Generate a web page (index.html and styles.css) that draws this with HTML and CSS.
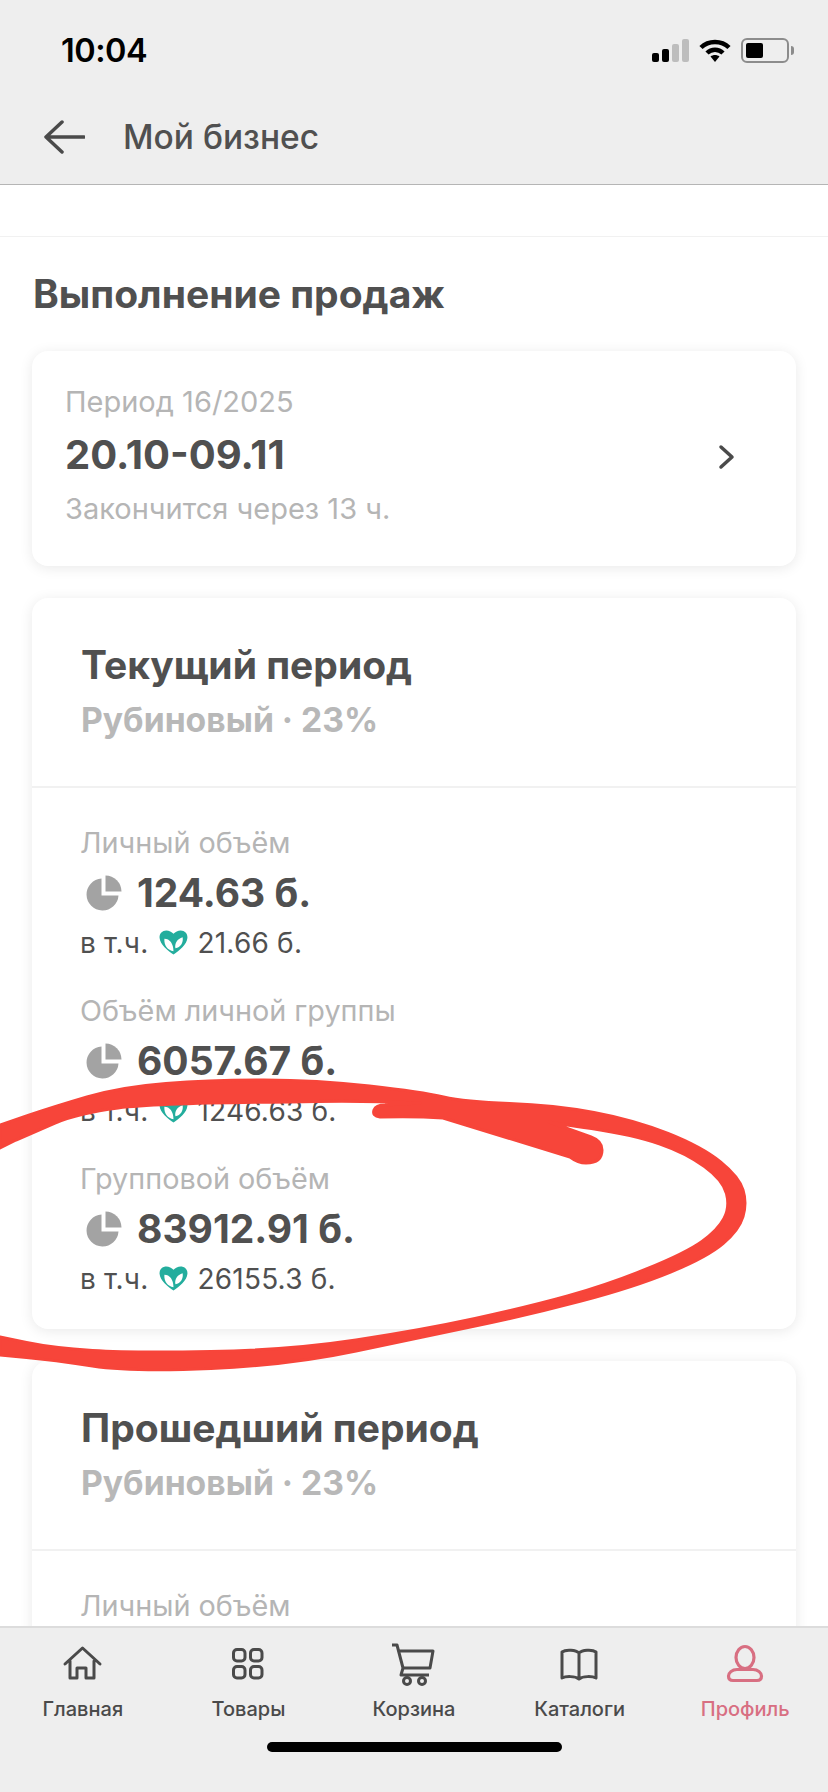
FILE: index.html
```html
<!DOCTYPE html>
<html lang="ru">
<head>
<meta charset="utf-8">
<title>Мой бизнес</title>
<link rel="stylesheet" href="styles.css">
</head>
<body>

<svg class="defs" width="0" height="0">
  <symbol id="pie" viewBox="0 0 36 36">
    <path d="M15.5 3.5A16 16 0 1 0 32.5 20.5H15.5Z" fill="#a3a3a3"/>
    <path d="M19.5 0.5A16 16 0 0 1 35.5 16.5H19.5Z" fill="#a3a3a3"/>
  </symbol>
  <symbol id="heart" viewBox="0 0 30 26">
    <path d="M15 25.500C9 21 1 15.500 0.500 8C0.200 3.500 3.500 0.500 7.500 0.500C10.500 0.500 13 2 15 4C17 2 19.500 0.500 22.500 0.500C26.500 0.500 29.800 3.500 29.500 8C29 15.500 21 21 15 25.500Z" fill="#23ad9d"/>
    <path d="M15 22C9 21 5 16 5.500 9C11 9 15 14 15 22ZM17 19C16 14 19 9 24.500 7.500C25.500 13 22.500 18 17 19Z" fill="#fff"/>
  </symbol>
</svg>

<div class="app">
  <header class="top-bar">
    <div class="status-bar">
      <span class="clock">10:04</span>
      <div class="status-icons">
        <div class="signal">
          <i class="bar bar-1"></i><i class="bar bar-2"></i><i class="bar bar-3"></i><i class="bar bar-4"></i>
        </div>
        <svg class="wifi" width="32" height="24" viewBox="0 0 32 24">
          <path d="M2 9.500C9.500 2 22.500 2 30 9.500" fill="none" stroke="#000" stroke-width="4.500"/>
          <path d="M8 15C12.500 10.500 19.500 10.500 24 15" fill="none" stroke="#000" stroke-width="4.500"/>
          <path d="M11.500 18.500L16 24L20.500 18.500C18 16.500 14 16.500 11.500 18.500Z" fill="#000"/>
        </svg>
        <div class="battery"><i class="battery-level"></i></div>
        <i class="battery-nub"></i>
      </div>
    </div>
    <div class="nav-bar">
      <svg class="back" width="42" height="34" viewBox="0 0 42 34">
        <path d="M41 17H3M19 2L3 17L19 32" fill="none" stroke="#4a4a4a" stroke-width="3.500" stroke-linecap="round" stroke-linejoin="round"/>
      </svg>
      <span class="nav-title">Мой бизнес</span>
    </div>
  </header>

  <main class="content">
    <div class="strip"></div>
    <h1 class="page-title">Выполнение продаж</h1>

    <section class="card period-card">
      <div>
        <div class="period-label">Период 16/2025</div>
        <div class="period-dates">20.10-09.11</div>
        <div class="period-label period-hint">Закончится через 13 ч.</div>
      </div>
      <svg class="chevron" width="18" height="26" viewBox="0 0 18 26">
        <path d="M3 3L14 13L3 23" fill="none" stroke="#4a4a4a" stroke-width="3.500" stroke-linecap="round" stroke-linejoin="round"/>
      </svg>
    </section>

    <section class="card">
      <div class="card-head">
        <h2>Текущий период</h2>
        <div class="rank">Рубиновый · 23%</div>
      </div>
      <div class="metrics">
        <div class="metric">
          <div class="metric-label">Личный объём</div>
          <div class="metric-value"><svg class="pie"><use href="#pie"/></svg>124.63 б.</div>
          <div class="metric-note">в т.ч. <svg class="heart"><use href="#heart"/></svg> 21.66 б.</div>
        </div>
        <div class="metric">
          <div class="metric-label">Объём личной группы</div>
          <div class="metric-value"><svg class="pie"><use href="#pie"/></svg>6057.67 б.</div>
          <div class="metric-note">в т.ч. <svg class="heart"><use href="#heart"/></svg> 1246.63 б.</div>
        </div>
        <div class="metric">
          <div class="metric-label">Групповой объём</div>
          <div class="metric-value"><svg class="pie"><use href="#pie"/></svg>83912.91 б.</div>
          <div class="metric-note">в т.ч. <svg class="heart"><use href="#heart"/></svg> 26155.3 б.</div>
        </div>
      </div>
    </section>

    <section class="card">
      <div class="card-head">
        <h2>Прошедший период</h2>
        <div class="rank">Рубиновый · 23%</div>
      </div>
      <div class="metrics">
        <div class="metric">
          <div class="metric-label">Личный объём</div>
        </div>
      </div>
    </section>
  </main>

  <nav class="tab-bar">
    <div class="tabs">
      <div class="tab">
        <svg width="44" height="44" viewBox="0 0 44 44">
          <path d="M4 22L21.500 6L39 22M9 19V36H16V26H25V36H33V19" fill="none" stroke="currentColor" stroke-width="3" stroke-linejoin="round" stroke-linecap="round"/>
        </svg>
        <span>Главная</span>
      </div>
      <div class="tab">
        <svg width="44" height="44" viewBox="0 0 44 44">
          <g fill="none" stroke="currentColor" stroke-width="3">
            <rect x="7.500" y="7.500" width="11.500" height="11.500" rx="3.500"/>
            <rect x="24.500" y="7.500" width="11.500" height="11.500" rx="3.500"/>
            <rect x="7.500" y="24.500" width="11.500" height="11.500" rx="3.500"/>
            <rect x="24.500" y="24.500" width="11.500" height="11.500" rx="3.500"/>
          </g>
        </svg>
        <span>Товары</span>
      </div>
      <div class="tab">
        <svg width="44" height="44" viewBox="0 0 44 44">
          <g fill="none" stroke="currentColor" stroke-width="3" stroke-linejoin="round">
            <path d="M0 3H5L11 26L9 33H37"/>
            <path d="M7 9H41L38 26H11"/>
            <circle cx="15" cy="39" r="3.500"/>
            <circle cx="30" cy="39" r="3.500"/>
          </g>
        </svg>
        <span>Корзина</span>
      </div>
      <div class="tab">
        <svg width="44" height="44" viewBox="0 0 44 44">
          <path d="M21 11C18 8 8 7 4 10V36C8 34 17 34 21 37C25 34 34 34 38 36V10C34 7 24 8 21 11V37" fill="none" stroke="currentColor" stroke-width="3" stroke-linejoin="round"/>
        </svg>
        <span>Каталоги</span>
      </div>
      <div class="tab tab-active">
        <svg width="44" height="44" viewBox="0 0 44 44">
          <g fill="none" stroke="currentColor" stroke-width="3.200">
            <ellipse cx="22" cy="15.500" rx="9" ry="11"/>
            <path d="M14 27.500H30C35 27.500 38.500 31 38.500 34C38.500 37 36.500 38.500 34 38.500H10C7.500 38.500 5.500 37 5.500 34C5.500 31 9 27.500 14 27.500Z"/>
          </g>
        </svg>
        <span>Профиль</span>
      </div>
    </div>
    <div class="home-indicator"></div>
  </nav>

  <!-- hand drawn marker on top of the screenshot -->
  <svg class="marker" width="828" height="1792" viewBox="0 0 828 1792">
    <path fill="#f7453a" stroke="#f7453a" stroke-width="3" stroke-linejoin="round" d="M0 1125L26.500 1116Q53 1107 87 1097Q121 1087 166 1083.500Q211 1080 264 1080Q317 1080 369.500 1086Q422 1092 443.500 1097Q465 1102 509.500 1103.500Q554 1105 594 1112.500Q634 1120 668 1133.500Q702 1147 720.500 1162Q739 1177 743 1190Q747 1203 743 1216.500Q739 1230 723 1243.500Q707 1257 670.500 1272Q634 1287 581 1301Q528 1315 475 1326Q422 1337 356 1351Q290 1365 211 1368.500Q132 1372 92.500 1366Q53 1360 26.500 1357.500L0 1355V1337L26.500 1342.500Q53 1348 92.500 1350.500Q132 1353 211 1351.500Q290 1350 356 1340Q422 1330 475 1318.500Q528 1307 567.500 1296Q607 1285 646.500 1269Q686 1253 702 1241.500Q718 1230 724 1218.500Q730 1207 726.500 1193.500Q723 1180 704.500 1166.500Q686 1153 660 1144Q634 1135 591.500 1128.500Q560 1124 549 1122L591 1137Q602 1141 602 1150Q602 1163 586 1163Q578 1163 570 1157L443 1118Q415 1116 380 1117Q372 1116 374 1110Q376 1105 385 1105L420 1103Q355 1100 290 1102Q158 1103 118 1108Q79 1113 55 1123Q32 1133 16 1140L0 1148Z"/>
  </svg>
</div>

</body>
</html>
```

FILE: styles.css
```css
* {
  box-sizing: border-box;
}

body {
  margin: 0;
  background-color: #fff;
  font-family: Inter, "Noto Sans", sans-serif;
  color: #505050;
}

.defs {
  position: absolute;
}

.app {
  position: relative;
  display: flex;
  flex-direction: column;
  width: 828px;
  height: 1792px;
  overflow: hidden;
}

.marker {
  position: absolute;
  top: 0;
  left: 0;
  pointer-events: none;
}

/* top bar */
.top-bar {
  flex-shrink: 0;
  height: 185px;
  background-color: #eee;
  border-bottom: 1px solid #b5b5b5;
}

.status-bar {
  display: flex;
  justify-content: space-between;
  align-items: center;
  height: 100px;
  padding: 0 34px 0 61px;
}

.clock {
  font-size: 32.5px;
  font-weight: 600;
  color: #000;
  letter-spacing: -0.5px;
}

.status-icons {
  display: flex;
  align-items: center;
  height: 26px;
}

.signal {
  display: flex;
  align-items: flex-end;
  gap: 3px;
  height: 23px;
  margin-right: 10px;
}

.bar {
  width: 7px;
  border-radius: 2px;
  background-color: #000;
}

.bar-1 { height: 9px; }
.bar-2 { height: 13px; }
.bar-3 { height: 18px; background-color: #bdbdbd; }
.bar-4 { height: 23px; background-color: #bdbdbd; }

.wifi {
  margin-right: 10px;
}

.battery {
  width: 48px;
  height: 25px;
  padding: 3px;
  border: 2px solid #8c8c8c;
  border-radius: 6px;
}

.battery-level {
  display: block;
  width: 17px;
  height: 100%;
  border-radius: 2px;
  background-color: #000;
}

.battery-nub {
  width: 3px;
  height: 9px;
  margin-left: 2px;
  border-radius: 0 3px 3px 0;
  background-color: #8c8c8c;
}

.nav-bar {
  display: flex;
  align-items: center;
  gap: 38px;
  height: 74px;
  padding-left: 43px;
}

.nav-title {
  font-size: 33.5px;
  font-weight: 500;
}

/* scrolling part */
.content {
  flex: 1;
  min-height: 0;
  overflow: hidden;
}

.strip {
  height: 52px;
  border-bottom: 1px solid #f1f1f1;
}

.page-title {
  margin: 32px 33px 0;
  font-size: 39px;
  line-height: 50px;
  font-weight: 700;
}

.card {
  margin: 32px 32px 0;
  border-radius: 16px;
  background-color: #fff;
  box-shadow: 0 2px 14px rgba(0, 0, 0, 0.09);
}

.period-card {
  display: flex;
  justify-content: space-between;
  align-items: center;
  margin-top: 32px;
  padding: 32px 60px 37px 33px;
}

.period-label {
  font-size: 29px;
  line-height: 38px;
  color: #b5b5b5;
}

.period-hint {
  line-height: 40px;
}

.period-dates {
  font-size: 40px;
  line-height: 68px;
  font-weight: 700;
}

.chevron {
  margin-top: 2px;
}

.card-head {
  padding: 44px 49px 44px;
  border-bottom: 2px solid #f1f1f1;
}

.card-head h2 {
  margin: 0;
  font-size: 39px;
  line-height: 46px;
  font-weight: 700;
}

.rank {
  margin-top: 10px;
  font-size: 33.7px;
  line-height: 44px;
  font-weight: 700;
  color: #b8b8b8;
}

.metrics {
  display: flex;
  flex-direction: column;
  gap: 32px;
  padding: 37px 48px 32px;
}

.metric-label {
  font-size: 28.8px;
  line-height: 36px;
  color: #b5b5b5;
}

.metric-value {
  display: flex;
  align-items: center;
  font-size: 39px;
  line-height: 64px;
  font-weight: 700;
}

.pie {
  width: 36px;
  height: 36px;
  margin: 0 15px 0 6px;
}

.metric-note {
  display: flex;
  align-items: center;
  gap: 10px;
  font-size: 28px;
  line-height: 36px;
  letter-spacing: 0.2px;
}

.heart {
  width: 29px;
  height: 25px;
  margin-top: -2px;
}

/* bottom tabs */
.tab-bar {
  flex-shrink: 0;
  height: 166px;
  background-color: #eee;
  border-top: 2px solid #dcdcdc;
}

.tabs {
  display: grid;
  grid-template-columns: repeat(5, 1fr);
  padding-top: 14px;
}

.tab {
  display: flex;
  flex-direction: column;
  align-items: center;
  color: #4a4a4a;
  font-size: 20px;
  line-height: 28px;
  font-weight: 500;
}

.tab span {
  margin-top: 9px;
}

.tab-active {
  color: #d86f82;
}

.home-indicator {
  width: 295px;
  height: 10px;
  margin: 19px auto 0;
  border-radius: 5px;
  background-color: #000;
}
```
